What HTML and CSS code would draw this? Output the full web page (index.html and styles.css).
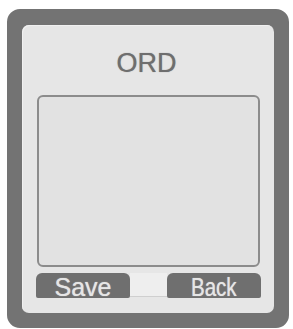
FILE: index.html
```html
<!DOCTYPE html>
<html>
<head>
<meta charset="utf-8">
<link rel="stylesheet" href="styles.css">
</head>
<body>
<div class="device">
  <div class="panel">
    <div class="title">ORD</div>
    <div class="screen"></div>
    <div class="keys">
      <div class="key key-left">Save</div>
      <div class="key-mid"></div>
      <div class="key key-right"><span class="narrow">Back</span></div>
    </div>
  </div>
</div>
</body>
</html>
```
FILE: styles.css
```css
html, body {
  margin: 0;
  padding: 0;
  background: #ffffff;
}
body {
  font-family: "Liberation Sans", Arial, sans-serif;
}
.device {
  margin: 9px 0 0 7px;
  width: 282px;
  height: 319px;
  box-sizing: border-box;
  border: 15px solid #737373;
  border-top-width: 16px;
  border-radius: 13px;
  background: #737373;
}
.panel {
  height: 100%;
  box-sizing: border-box;
  background: #e6e6e6;
  border-radius: 7px;
  padding: 0 13px 15px 14px;
  display: flex;
  flex-direction: column;
  box-shadow: inset 1px 1px 0 #f0f0f0;
}
.title {
  padding-top: 25px;
  height: 27px;
  line-height: 27px;
  font-size: 27px;
  color: #6e6e6e;
  text-shadow: 0 0 1px #8a8a8a;
  text-align: center;
  margin-bottom: 18px;
  padding-right: 4px;
}
.screen {
  margin: 0 1px 0 1px;
  height: 172px;
  box-sizing: border-box;
  border: 2px solid #8c8c8c;
  border-radius: 6px;
  background: #e2e2e2;
}
.keys {
  margin-top: 6px;
  height: 25px;
  display: flex;
}
.key {
  width: 94px;
  height: 25px;
  background: #6f6f6f;
  color: #e6e6e6;
  font-size: 25px;
  line-height: 28px;
  text-align: center;
  border-radius: 6px 6px 2px 2px;
  overflow: visible;
  text-shadow: 0 0 1px #d0d0d0;
}
.key-mid {
  flex: 1;
  height: 23px;
  background: #eeeeee;
  border-bottom: 1px solid #cfcfcf;
}
.narrow {
  display: inline-block;
  transform: scaleX(0.82);
}
```
